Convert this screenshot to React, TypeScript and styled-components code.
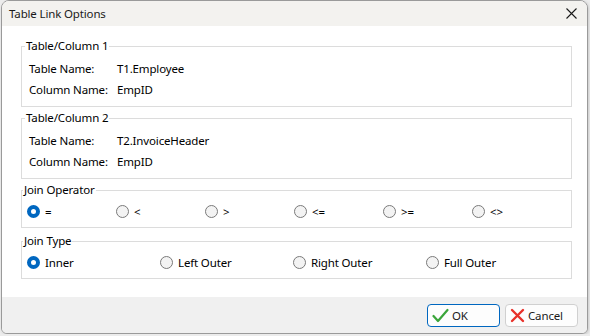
import React, { useState } from 'react';
import styled, { createGlobalStyle } from 'styled-components';

const GlobalStyle = createGlobalStyle`
  html, body {
    margin: 0;
    padding: 0;
    background: #ececec;
  }
  body {
    font-family: 'Noto Sans', 'Open Sans', sans-serif;
    font-size: 11.5px;
    letter-spacing: -0.15px;
    color: #000;
  }
`;

const operators = ['=', '<', '>', '<=', '>=', '<>'];
const joinTypes = ['Inner', 'Left Outer', 'Right Outer', 'Full Outer'];

const CheckIcon = () => (
  <svg width="17" height="15" viewBox="0 0 17 15">
    <path d="M1.5 8 L6 13 L15.5 2" fill="none" stroke="#3aa53a" strokeWidth="2.2" strokeLinecap="round" strokeLinejoin="round" />
  </svg>
);

const CrossIcon = () => (
  <svg width="15" height="15" viewBox="0 0 15 15">
    <path d="M2 2 L13 13 M13 2 L2 13" fill="none" stroke="#e8312a" strokeWidth="2.4" strokeLinecap="round" />
  </svg>
);

const CloseIcon = () => (
  <svg width="11" height="11" viewBox="0 0 11 11">
    <path d="M0.5 0.5 L10.5 10.5 M10.5 0.5 L0.5 10.5" stroke="#1a1a1a" strokeWidth="1.1" />
  </svg>
);

export default function App() {
  const [op, setOp] = useState('=');
  const [joinType, setJoinType] = useState('Inner');

  return (
    <>
      <GlobalStyle />
      <Window>
        <TitleBar>
          <Title>Table Link Options</Title>
          <CloseButton>
            <CloseIcon />
          </CloseButton>
        </TitleBar>
        <Body>
          <Group>
            <Legend>Table/Column 1</Legend>
            <InfoRow>
              <Label>Table Name:</Label>
              <Value>T1.Employee</Value>
            </InfoRow>
            <InfoRow>
              <Label>Column Name:</Label>
              <Value>EmpID</Value>
            </InfoRow>
          </Group>
          <Group>
            <Legend>Table/Column 2</Legend>
            <InfoRow>
              <Label>Table Name:</Label>
              <Value>T2.InvoiceHeader</Value>
            </InfoRow>
            <InfoRow>
              <Label>Column Name:</Label>
              <Value>EmpID</Value>
            </InfoRow>
          </Group>
          <Group $radio>
            <Legend>Join Operator</Legend>
            <RadioRow $cols={6} $colWidth={89}>
              {operators.map((o) => (
                <RadioItem key={o} onClick={() => setOp(o)}>
                  <RadioDot $checked={op === o} />
                  <RadioLabel>{o}</RadioLabel>
                </RadioItem>
              ))}
            </RadioRow>
          </Group>
          <Group $radio $spaced>
            <Legend>Join Type</Legend>
            <RadioRow $cols={4} $colWidth={133}>
              {joinTypes.map((t) => (
                <RadioItem key={t} onClick={() => setJoinType(t)}>
                  <RadioDot $checked={joinType === t} />
                  <RadioLabel>{t}</RadioLabel>
                </RadioItem>
              ))}
            </RadioRow>
          </Group>
        </Body>
        <Footer>
          <Button $primary>
            <CheckIcon />
            OK
          </Button>
          <Button>
            <CrossIcon />
            Cancel
          </Button>
        </Footer>
      </Window>
    </>
  );
}

const Window = styled.div`
  width: 585px;
  height: 332px;
  margin: 0 0 0 1px;
  border: 1px solid #9a9a9a;
  border-radius: 8px 8px 6px 6px;
  background: #fff;
  overflow: hidden;
  display: flex;
  flex-direction: column;
  box-shadow: 1px 1px 3px rgba(0, 0, 0, 0.15);
`;

const TitleBar = styled.div`
  height: 25px;
  flex: none;
  display: flex;
  align-items: center;
  justify-content: space-between;
  background: #f3f2ef;
  padding: 0 9px 0 7px;
`;

const Title = styled.span`
  font-size: 11.5px;
  color: #1a1a1a;
`;

const CloseButton = styled.div`
  width: 14px;
  height: 14px;
  display: flex;
  align-items: center;
  justify-content: center;
`;

const Body = styled.div`
  flex: 1;
  display: flex;
  flex-direction: column;
  gap: 3px;
  padding: 12px 15px 0 19px;
`;

const Group = styled.fieldset<{ $radio?: boolean; $spaced?: boolean }>`
  margin: ${(p) => (p.$spaced ? '2px 0 0' : '0')};
  border: 1px solid #dcdcdc;
  padding: ${(p) => (p.$radio ? '3px 6px 6px 5px' : '4px 6px 6px 7px')};
  min-width: 0;
`;

const Legend = styled.legend`
  padding: 0 1px;
  margin-left: -4px;
  line-height: 16px;
`;

const InfoRow = styled.div`
  display: flex;
  align-items: center;
  height: 21px;
`;

const Label = styled.span`
  width: 88px;
`;

const Value = styled.span``;

const RadioRow = styled.div<{ $cols: number; $colWidth: number }>`
  display: grid;
  grid-template-columns: repeat(${(p) => p.$cols}, ${(p) => p.$colWidth}px);
  height: 20px;
  align-items: center;
`;

const RadioItem = styled.label`
  display: flex;
  align-items: center;
  gap: 5px;
  cursor: default;
`;

const RadioDot = styled.span<{ $checked?: boolean }>`
  width: 13px;
  height: 13px;
  box-sizing: border-box;
  border-radius: 50%;
  flex: none;
  border: ${(p) => (p.$checked ? '4px solid #0067c0' : '1px solid #7a7a7a')};
  background: ${(p) => (p.$checked ? '#fff' : '#f3f3f3')};
`;

const RadioLabel = styled.span``;

const Footer = styled.div`
  height: 36px;
  flex: none;
  background: #f0f0f0;
  display: flex;
  align-items: center;
  justify-content: flex-end;
  gap: 5px;
  padding: 0 9px 0 0;
`;

const Button = styled.button<{ $primary?: boolean }>`
  width: 73px;
  height: 23px;
  box-sizing: border-box;
  border: 1px solid ${(p) => (p.$primary ? '#0067c0' : '#d0d0d0')};
  border-radius: 4px;
  background: #fdfdfd;
  font-family: inherit;
  font-size: 11.5px;
  letter-spacing: -0.15px;
  color: #1a1a1a;
  display: flex;
  align-items: center;
  gap: 3px;
  padding: 0 4px;
`;
